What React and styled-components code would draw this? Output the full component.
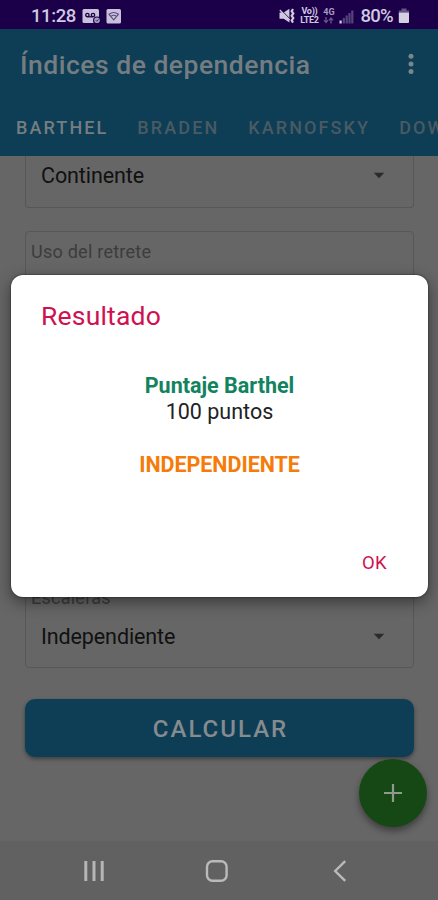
import React from "react";
import styled, { createGlobalStyle } from "styled-components";

const tabs = ["BARTHEL", "BRADEN", "KARNOFSKY", "DOWNTON"];

const App = () => {
  return (
    <Screen>
      <GlobalStyle />
      <StatusBar>
        <Clock>11:28</Clock>
        <VoicemailIcon />
        <WifiCardIcon />
        <Spacer />
        <MuteIcon />
        <Network>
          <span>Vo))</span>
          <span>LTE2</span>
        </Network>
        <MobileData>
          <span>4G</span>
          <ArrowsIcon />
        </MobileData>
        <SignalIcon />
        <Percent>80%</Percent>
        <BatteryIcon />
      </StatusBar>
      <Header>
        <TitleRow>
          <Title>Índices de dependencia</Title>
          <MoreIcon />
        </TitleRow>
        <Tabs>
          {tabs.map((tab, i) => (
            <Tab key={tab} $active={i === 0}>
              {tab}
            </Tab>
          ))}
        </Tabs>
      </Header>
      <Content>
        <Field $height={52} $open>
          <Select>
            <Value>Continente</Value>
            <CaretIcon />
          </Select>
        </Field>
        <Field $height={92} $top={23}>
          <Label>Uso del retrete</Label>
        </Field>
        <Field $height={91} $top={254}>
          <Label>Escaleras</Label>
          <Select>
            <Value>Independiente</Value>
            <CaretIcon />
          </Select>
        </Field>
        <Calculate>CALCULAR</Calculate>
      </Content>
      <NavBar>
        <RecentsIcon />
        <HomeIcon />
        <BackIcon />
      </NavBar>
      <Fab>
        <svg width="20" height="20" viewBox="0 0 20 20">
          <path d="M10 1v18M1 10h18" stroke="#8d9a8c" strokeWidth="2.2" fill="none" />
        </svg>
      </Fab>
      <Dialog>
        <DialogTitle>Resultado</DialogTitle>
        <Score>Puntaje Barthel</Score>
        <Points>100 puntos</Points>
        <Level>INDEPENDIENTE</Level>
        <Ok>OK</Ok>
      </Dialog>
    </Screen>
  );
};

export default App;

const VoicemailIcon = () => (
  <Icon width="19" height="17" viewBox="0 0 19 17" $left={6}>
    <rect x="0.5" y="1" width="16.5" height="14" rx="1.5" fill="#c9c1dc" />
    <g fill="none" stroke="#1b0049" strokeWidth="1.3">
      <circle cx="5.4" cy="7" r="1.7" />
      <circle cx="11" cy="7" r="1.7" />
      <path d="M5.2 8.8h6" />
    </g>
    <circle cx="15" cy="12.5" r="4" fill="#1b0049" />
    <circle cx="15" cy="12.3" r="2.8" fill="#aaa0c2" />
    <path d="M13.8 12.3l1 1 1.6-2" fill="none" stroke="#1b0049" strokeWidth="0.8" />
  </Icon>
);

const WifiCardIcon = () => (
  <Icon width="16" height="17" viewBox="0 0 16 17" $left={5}>
    <rect x="0.5" y="1" width="14.5" height="14.5" rx="1.5" fill="#c9c1dc" />
    <g fill="none" stroke="#5a4a80" strokeWidth="1.1">
      <path d="M3 6.3Q7.7 2.8 12.4 6.3L7.7 11.8z" />
      <path d="M5 8.2q2.7-2 5.4 0" />
    </g>
  </Icon>
);

const MuteIcon = () => (
  <Icon width="17" height="16" viewBox="0 0 17 16" $right={3}>
    <path d="M.5 4.6h4.2L10.4.8v13.8L4.7 10.8H.5z" fill="#cfc8df" />
    <path d="M1.6 1.4l9.6 9.6" stroke="#1b0049" strokeWidth="1" />
    <path d="M.8 2l9.8 10" stroke="#cfc8df" strokeWidth="1.2" />
    <path
      d="M14 1l-1.3 2.2 1.6 2.3-1.6 2.3 1.6 2.3-1.6 2.3 1.3 2.2"
      stroke="#cfc8df"
      strokeWidth="2.2"
      fill="none"
    />
  </Icon>
);

const ArrowsIcon = () => (
  <Icon width="11" height="7" viewBox="0 0 11 7">
    <path d="M3 0v5M1 3.2l2 2.4 2-2.4M8 6.5v-5M6 3.4L8 1l2 2.4" stroke="#65558b" strokeWidth="1.3" fill="none" />
  </Icon>
);

const SignalIcon = () => (
  <Icon width="15" height="15" viewBox="0 0 15 15" $left={4}>
    <rect x="0.5" y="11.5" width="2.2" height="3" fill="#d5cfe2" />
    <rect x="3.7" y="9" width="2.2" height="5.5" fill="#54437d" />
    <rect x="6.6" y="6.5" width="2.2" height="8" fill="#54437d" />
    <rect x="9.4" y="4" width="2.2" height="10.5" fill="#54437d" />
    <rect x="12.2" y="1.5" width="2.2" height="13" fill="#54437d" />
  </Icon>
);

const BatteryIcon = () => (
  <Icon width="12" height="16" viewBox="0 0 12 16" $left={5}>
    <path d="M3.5 0.5h5v2H11v2H0.8v-2h2.7z" fill="#65558b" />
    <path d="M.8 4.5H11v9.5q0 1-1 1H1.8q-1 0-1-1z" fill="#d5cfe2" />
  </Icon>
);

const MoreIcon = () => (
  <Icon width="8" height="22" viewBox="0 0 8 22" fill="#7a858c">
    <circle cx="4" cy="3.3" r="2.5" />
    <circle cx="4" cy="10.9" r="2.5" />
    <circle cx="4" cy="18.5" r="2.5" />
  </Icon>
);

const CaretIcon = () => (
  <Icon width="12" height="9" viewBox="0 0 12 9">
    <path d="M.7.8h10.6L6 6.2z" fill="#2b2b2b" />
  </Icon>
);

const RecentsIcon = () => (
  <Icon width="22" height="22" viewBox="0 0 22 22">
    <path d="M2.8 1v20M11 1v20M19.2 1v20" stroke="#b6b6b6" strokeWidth="3" />
  </Icon>
);

const HomeIcon = () => (
  <Icon width="24" height="24" viewBox="0 0 24 24" $left={100}>
    <rect x="2" y="2.2" width="19.6" height="19.6" rx="5.5" fill="none" stroke="#bababa" strokeWidth="2.4" />
  </Icon>
);

const BackIcon = () => (
  <Icon width="14" height="22" viewBox="0 0 14 22" $left={104}>
    <path d="M12.2 1.2L2.2 11l10 9.8" fill="none" stroke="#bababa" strokeWidth="2.4" />
  </Icon>
);

const GlobalStyle = createGlobalStyle`
  body {
    margin: 0;
    background: #666;
    font-family: Roboto, sans-serif;
  }
  * {
    box-sizing: border-box;
  }
`;

const Icon = styled.svg`
  display: block;
  flex-shrink: 0;
  margin-left: ${(props) => props.$left || 0}px;
  margin-right: ${(props) => props.$right || 0}px;
`;

const Screen = styled.div`
  position: relative;
  display: flex;
  flex-direction: column;
  width: 438px;
  height: 900px;
  overflow: hidden;
  background: #666;
`;

const StatusBar = styled.div`
  display: flex;
  align-items: center;
  height: 29px;
  padding: 3px 28px 0 31px;
  background: #1b0049;
  color: #d0cae0;
`;

const Clock = styled.span`
  font-size: 18.5px;
  line-height: 24px;
  font-weight: 500;
  letter-spacing: -0.4px;
`;

const Spacer = styled.div`
  flex: 1;
`;

const Network = styled.div`
  display: flex;
  flex-direction: column;
  align-items: center;
  width: 20px;
  font-size: 9px;
  line-height: 9px;
  font-weight: 700;
  letter-spacing: -0.3px;
`;

const MobileData = styled.div`
  display: flex;
  flex-direction: column;
  align-items: center;
  width: 13px;
  margin-left: 3px;
  color: #a79cc0;
  font-size: 9px;
  line-height: 9px;
  font-weight: 700;
`;

const Percent = styled.span`
  margin-left: 6px;
  font-size: 18.5px;
  line-height: 24px;
  font-weight: 500;
  letter-spacing: -0.7px;
`;

const Header = styled.div`
  height: 127px;
  background: #0d3e55;
`;

const TitleRow = styled.div`
  display: flex;
  align-items: center;
  justify-content: space-between;
  height: 70px;
  padding: 0 23px 0 20px;
`;

const Title = styled.h1`
  margin: 2px 0 0;
  color: #757d82;
  font-size: 26.5px;
  line-height: 32px;
  font-weight: 500;
  letter-spacing: 0.5px;
`;

const Tabs = styled.div`
  display: flex;
  gap: 29px;
  padding: 18px 0 0 16px;
  overflow: hidden;
`;

const Tab = styled.span`
  color: ${(props) => (props.$active ? "#757d82" : "#4a5a63")};
  font-size: 18px;
  line-height: 22px;
  font-weight: 500;
  letter-spacing: 2.1px;
`;

const Content = styled.div`
  display: flex;
  flex-direction: column;
  height: 685px;
  padding: 0 24px 0 25px;
`;

const Field = styled.div`
  display: flex;
  flex-direction: column;
  flex-shrink: 0;
  height: ${(props) => props.$height}px;
  margin-top: ${(props) => props.$top || 0}px;
  padding: ${(props) => (props.$open ? 0 : 9)}px 28px ${(props) => (props.$open ? 18 : 17)}px 15px;
  border: 1px solid #575757;
  border-top-width: ${(props) => (props.$open ? 0 : 1)}px;
  border-radius: ${(props) => (props.$open ? "0 0 4px 4px" : "4px")};
`;

const Label = styled.span`
  margin-left: -10px;
  color: #3c3c3c;
  font-size: 18px;
  line-height: 22px;
  letter-spacing: 0.25px;
`;

const Select = styled.div`
  display: flex;
  align-items: center;
  justify-content: space-between;
  margin-top: auto;
`;

const Value = styled.span`
  color: #111;
  font-size: 21.5px;
  line-height: 26px;
  letter-spacing: -0.1px;
`;

const Calculate = styled.button`
  flex-shrink: 0;
  height: 58px;
  margin-top: 31px;
  padding: 2px 0 0 2px;
  border: 0;
  border-radius: 10px;
  background: #0d3e55;
  box-shadow: 0 2px 4px rgba(0, 0, 0, 0.4);
  color: #858b8e;
  font-family: inherit;
  font-size: 24px;
  font-weight: 500;
  letter-spacing: 2px;
`;

const NavBar = styled.div`
  display: flex;
  align-items: center;
  height: 59px;
  padding-left: 83px;
  background: #616161;
`;

const Fab = styled.div`
  position: absolute;
  right: 11px;
  bottom: 73px;
  display: flex;
  align-items: center;
  justify-content: center;
  width: 68px;
  height: 68px;
  border-radius: 50%;
  background: #154814;
  box-shadow: 0 4px 7px rgba(0, 0, 0, 0.4);
`;

const Dialog = styled.div`
  position: absolute;
  left: 11px;
  top: 275px;
  display: flex;
  flex-direction: column;
  align-items: center;
  width: 417px;
  height: 322px;
  padding: 24px 30px 23px;
  border-radius: 12px;
  background: #fff;
  box-shadow: 0 5px 16px rgba(0, 0, 0, 0.45), 0 0 2px rgba(0, 0, 0, 0.7);
`;

const DialogTitle = styled.h2`
  align-self: flex-start;
  margin: 0 0 40px;
  color: #cf1150;
  font-size: 26.5px;
  line-height: 34px;
  font-weight: 400;
  letter-spacing: 0.2px;
`;

const Score = styled.strong`
  color: #12825f;
  font-size: 21.5px;
  line-height: 26px;
  font-weight: 700;
`;

const Points = styled.span`
  color: #222;
  font-size: 21.5px;
  line-height: 26px;
`;

const Level = styled.strong`
  margin-top: 27px;
  color: #f57c0a;
  font-size: 21.5px;
  line-height: 26px;
  font-weight: 700;
  letter-spacing: -0.05px;
`;

const Ok = styled.span`
  align-self: flex-end;
  margin: auto 11px 0 0;
  color: #cf1150;
  font-size: 18.5px;
  line-height: 22px;
  font-weight: 400;
  letter-spacing: 0.3px;
`;
